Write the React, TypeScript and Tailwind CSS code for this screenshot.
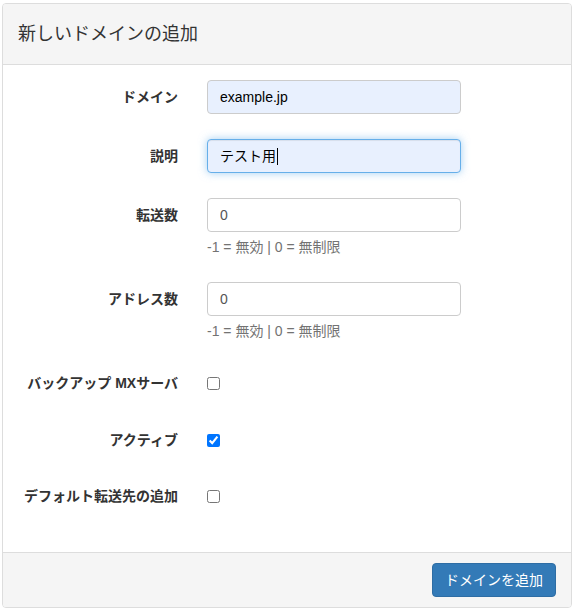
import React from "react";

const font = { fontFamily: '"Liberation Sans", "Noto Sans CJK JP", sans-serif' };

const Label = ({ children }: { children: React.ReactNode }) => (
  <label className="w-[160px] shrink-0 text-right text-[14px] font-bold text-[#333]">{children}</label>
);

const inputBase =
  "block h-[34px] w-[254px] rounded-[4px] border px-[12px] text-[14px] leading-[20px] outline-none";

const App = () => {
  return (
    <div className="h-[610px] w-[575px] bg-white pl-[2px] pr-[3px] pt-[3px]" style={font}>
      <div className="overflow-hidden rounded-[4px] border border-[#ddd] bg-white">
        <div className="flex h-[61px] items-center border-b border-[#ddd] bg-[#f5f5f5] px-[15px]">
          <h3 className="text-[18px] text-[#333]">新しいドメインの追加</h3>
        </div>

        <div className="px-[15px] pb-[15px] pt-[15px]">
          {/* ドメイン */}
          <div className="flex items-center">
            <Label>ドメイン</Label>
            <input
              readOnly
              value="example.jp"
              className={`${inputBase} ml-[29px] border-[#ccc] bg-[#e8f0fe] text-black`}
            />
          </div>

          {/* 説明 */}
          <div className="mt-[25px] flex items-center">
            <Label>説明</Label>
            <div
              className={`${inputBase} ml-[29px] flex items-center border-[#66afe9] bg-[#e8f0fe] text-black shadow-[inset_0_1px_1px_rgba(0,0,0,0.075),0_0_8px_rgba(102,175,233,0.6)]`}
            >
              テスト用
              <span className="ml-[1px] inline-block h-[17px] w-[1px] bg-black" />
            </div>
          </div>

          {/* 転送数 */}
          <div className="mt-[25px] flex items-start">
            <div className="flex h-[34px] items-center">
              <Label>転送数</Label>
            </div>
            <div className="ml-[29px]">
              <input readOnly value="0" className={`${inputBase} border-[#ccc] bg-white text-[#555]`} />
              <p className="mt-[5px] text-[14px] leading-[20px] text-[#737373]">-1 = 無効 | 0 = 無制限</p>
            </div>
          </div>

          {/* アドレス数 */}
          <div className="mt-[25px] flex items-start">
            <div className="flex h-[34px] items-center">
              <Label>アドレス数</Label>
            </div>
            <div className="ml-[29px]">
              <input readOnly value="0" className={`${inputBase} border-[#ccc] bg-white text-[#555]`} />
              <p className="mt-[5px] text-[14px] leading-[20px] text-[#737373]">-1 = 無効 | 0 = 無制限</p>
            </div>
          </div>

          {/* checkboxes */}
          <div className="mt-[25px] flex h-[34px] items-center">
            <Label>バックアップ MXサーバ</Label>
            <input type="checkbox" readOnly className="ml-[29px] m-0 h-[13px] w-[13px]" />
          </div>
          <div className="mt-[23px] flex h-[34px] items-center">
            <Label>アクティブ</Label>
            <input type="checkbox" checked readOnly className="ml-[29px] m-0 h-[13px] w-[13px]" />
          </div>
          <div className="mt-[22px] flex h-[34px] items-center">
            <Label>デフォルト転送先の追加</Label>
            <input type="checkbox" readOnly className="ml-[29px] m-0 h-[13px] w-[13px]" />
          </div>
          <div className="h-[24px]" />
        </div>

        <div className="flex justify-end border-t border-[#ddd] bg-[#f5f5f5] px-[15px] py-[10px]">
          <button className="h-[34px] rounded-[4px] border border-[#2e6da4] bg-[#337ab7] px-[12px] text-[14px] text-white">
            ドメインを追加
          </button>
        </div>
      </div>
    </div>
  );
};

export default App;
